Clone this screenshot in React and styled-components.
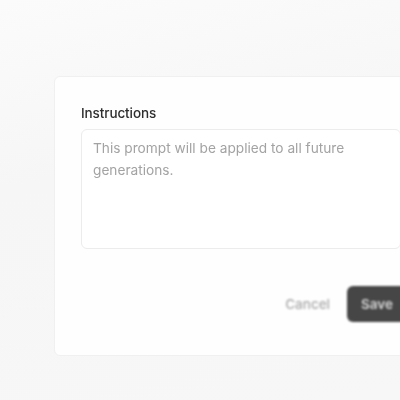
import React from "react";
import styled, { createGlobalStyle } from "styled-components";

const GlobalStyle = createGlobalStyle`
  html, body {
    margin: 0;
    padding: 0;
    background: #f8f8f8;
    overflow: hidden;
  }
  body {
    font-family: Inter, "Open Sans", sans-serif;
  }
`;

const Page = styled.div`
  width: 400px;
  height: 400px;
  overflow: hidden;
  padding-top: 76px;
  padding-left: 54px;
  box-sizing: border-box;
  background: linear-gradient(170deg, #fbfbfb 0%, #f6f6f6 40%, #f7f7f7 100%);
  filter: blur(0.6px);
`;

const Card = styled.div`
  width: 420px;
  height: 280px;
  box-sizing: border-box;
  background: #fefefe;
  border: 1px solid #f0f0f0;
  border-radius: 6px;
  padding: 28px 0 0 26px;
  display: flex;
  flex-direction: column;
`;

const Label = styled.div`
  font-size: 13.5px;
  font-weight: 500;
  color: #2e2e2e;
  margin-bottom: 8px;
  letter-spacing: -0.1px;
`;

const TextArea = styled.div`
  height: 120px;
  box-sizing: border-box;
  border: 1px solid #ececec;
  border-radius: 6px;
  padding: 7px 40px 0 11px;
  font-size: 13.7px;
  line-height: 22px;
  color: #a3a3a3;
  background: #ffffff;
  width: 320px;
`;

const Actions = styled.div`
  display: flex;
  justify-content: flex-end;
  align-items: center;
  gap: 17px;
  margin-top: 37px;
  width: 328px;
`;

const CancelButton = styled.button`
  border: none;
  background: transparent;
  font-family: inherit;
  font-size: 13.5px;
  font-weight: 500;
  color: #a9a9a9;
  padding: 0;
  filter: blur(1px);
`;

const SaveButton = styled.button`
  flex-shrink: 0;
  border: none;
  background: #464646;
  color: #d8d8d8;
  font-family: inherit;
  font-size: 13.5px;
  font-weight: 600;
  width: 62px;
  height: 36px;
  border-radius: 6px;
  text-align: left;
  padding: 0 0 0 14px;
  filter: blur(0.8px);
`;

export default function App() {
  return (
    <>
      <GlobalStyle />
      <Page>
        <Card>
          <Label>Instructions</Label>
          <TextArea>
            This prompt will be applied to all future generations.
          </TextArea>
          <Actions>
            <CancelButton>Cancel</CancelButton>
            <SaveButton>Save</SaveButton>
          </Actions>
        </Card>
      </Page>
    </>
  );
}
